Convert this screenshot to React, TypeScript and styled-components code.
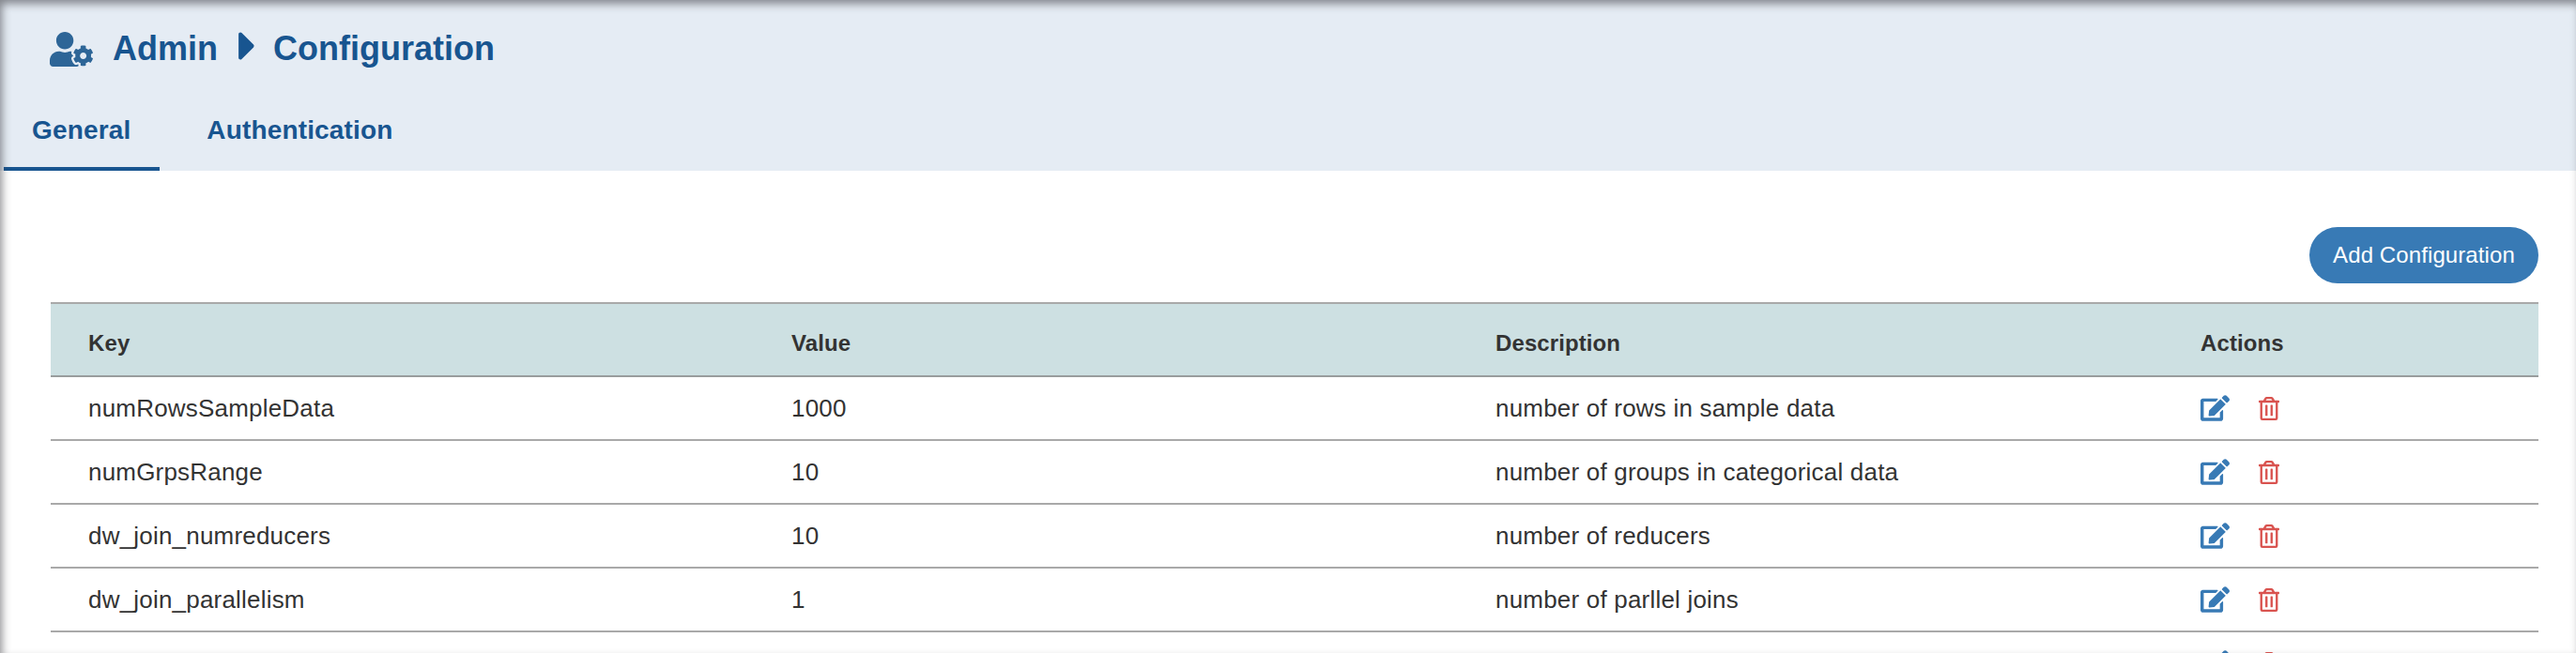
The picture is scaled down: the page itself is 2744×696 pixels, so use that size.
import React from "react";
import styled, { createGlobalStyle } from "styled-components";
import { FaCaretRight, FaEdit, FaRegTrashAlt, FaUserCog } from "react-icons/fa";

const Global = createGlobalStyle`
  html, body { margin: 0; padding: 0; height: 100%; overflow: hidden; background: #fff; }
  body { font-family: "Liberation Sans", Arial, sans-serif; }
  * { box-sizing: border-box; }
`;

const Page = styled.div`
  position: relative;
  width: 2744px;
  height: 696px;
  overflow: hidden;
  background: #fff;
  &::after {
    content: "";
    position: absolute;
    inset: 0;
    pointer-events: none;
    box-shadow: inset 3px 5px 10px -1px rgba(50, 50, 55, 0.55);
  }
`;

const Header = styled.header`
  height: 182px;
  background: #e5ecf4;
  color: #185590;
  display: flex;
  flex-direction: column;
`;

const Breadcrumb = styled.div`
  display: flex;
  align-items: center;
  height: 104px;
  padding-left: 53px;
  font-size: 36px;
  font-weight: 700;
`;

const UserIcon = styled(FaUserCog)`
  width: 46px;
  height: 37px;
  margin-right: 21px;
  color: #2d6597;
`;

const Caret = styled(FaCaretRight)`
  width: 19px;
  height: 50px;
  margin: 0 18px 7px 22px;
`;

const Tabs = styled.nav`
  display: flex;
  height: 78px;
  padding-left: 4px;
`;

const Tab = styled.div<{ $active?: boolean }>`
  height: 78px;
  padding: 0 31px 4px 30px;
  margin-right: 20px;
  display: flex;
  align-items: center;
  font-size: 28px;
  letter-spacing: 0.15px;
  font-weight: 700;
  border-bottom: 4px solid ${(p) => (p.$active ? "#185590" : "transparent")};
`;

const Content = styled.main`
  padding: 60px 40px 0 54px;
`;

const Toolbar = styled.div`
  display: flex;
  justify-content: flex-end;
  height: 80px;
`;

const AddButton = styled.button`
  width: 244px;
  height: 60px;
  border: 0;
  border-radius: 30px;
  background: #387ab5;
  color: #fff;
  font-family: inherit;
  font-size: 24px;
  letter-spacing: 0.1px;
  padding: 0;
`;

const Table = styled.div`
  border-top: 2px solid #a9a9a9;
`;

const Row = styled.div<{ $head?: boolean }>`
  display: grid;
  grid-template-columns: 749px 750px 751px 400px;
  height: ${(p) => (p.$head ? "78px" : "68px")};
  align-items: center;
  padding-top: ${(p) => (p.$head ? "7px" : "0")};
  background: ${(p) => (p.$head ? "#cde0e2" : "#fff")};
  border-bottom: 2px solid ${(p) => (p.$head ? "#999d9d" : "#a9a9a9")};
  color: #333;
  font-size: ${(p) => (p.$head ? "24px" : "26px")};
  letter-spacing: ${(p) => (p.$head ? "0.1px" : "0.2px")};
  font-weight: ${(p) => (p.$head ? 700 : 400)};
`;

const Cell = styled.div`
  padding-left: 40px;
`;

const Actions = styled(Cell)`
  display: flex;
  align-items: center;
`;

const EditIcon = styled(FaEdit)`
  width: 31px;
  height: 28px;
  color: #387ab5;
  margin-right: 31px;
`;

const TrashIcon = styled(FaRegTrashAlt)`
  width: 22px;
  height: 27px;
  color: #d9534f;
`;

const rows = [
  ["numRowsSampleData", "1000", "number of rows in sample data"],
  ["numGrpsRange", "10", "number of groups in categorical data"],
  ["dw_join_numreducers", "10", "number of reducers"],
  ["dw_join_parallelism", "1", "number of parllel joins"],
  ["", "", ""],
];

export default function App() {
  return (
    <Page>
      <Global />
      <Header>
        <Breadcrumb>
          <UserIcon />
          Admin
          <Caret />
          Configuration
        </Breadcrumb>
        <Tabs>
          <Tab $active>General</Tab>
          <Tab>Authentication</Tab>
        </Tabs>
      </Header>
      <Content>
        <Toolbar>
          <AddButton>Add Configuration</AddButton>
        </Toolbar>
        <Table>
          <Row $head>
            <Cell>Key</Cell>
            <Cell>Value</Cell>
            <Cell>Description</Cell>
            <Cell>Actions</Cell>
          </Row>
          {rows.map((r, i) => (
            <Row key={i}>
              <Cell>{r[0]}</Cell>
              <Cell>{r[1]}</Cell>
              <Cell>{r[2]}</Cell>
              <Actions>
                <EditIcon />
                <TrashIcon />
              </Actions>
            </Row>
          ))}
        </Table>
      </Content>
    </Page>
  );
}
